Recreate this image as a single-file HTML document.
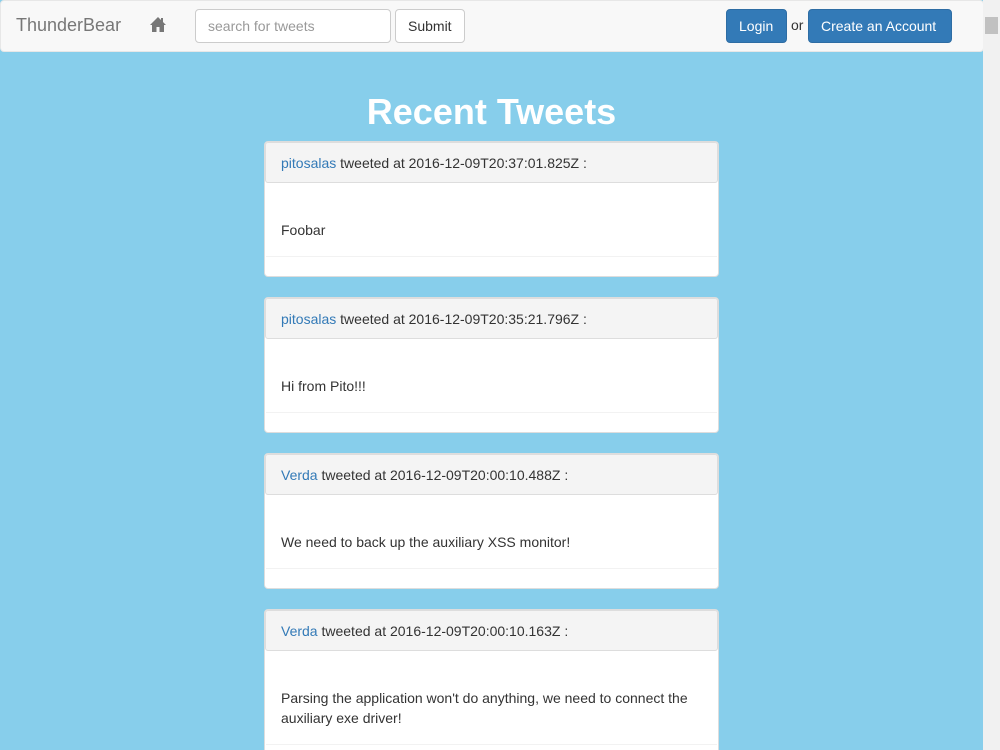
<!DOCTYPE html>
<html style="overflow:hidden;height:750px"><head><style>
body{margin:0;width:1000px;height:750px;overflow:hidden;background:#87ceeb;font-family:"Liberation Sans",sans-serif;font-size:14px;color:#333;position:relative}
.nav{position:absolute;left:0;top:0;width:982px;height:50px;background:#f8f8f8;border:1px solid #e7e7e7;border-radius:4px}
.brand{position:absolute;left:15px;top:14px;font-size:18px;color:#777}
.inp{position:absolute;left:194px;top:8px;width:196px;height:34px;border:1px solid #ccc;border-radius:4px;background:#fff;box-sizing:border-box;padding:8px 12px;color:#999}
.btn{position:absolute;top:8px;height:34px;box-sizing:border-box;border-radius:4px;padding:8px 12px;font-size:14px}
.sb{position:absolute;right:0;top:0;width:17px;height:750px;background:#f1f1f1}
.sb div{position:absolute;left:2px;top:17px;width:13px;height:17px;background:#c1c1c1}
h1{position:absolute;left:0;width:983px;top:91px;margin:0;text-align:center;color:#fff;font-size:36px;font-weight:bold}
.card{position:absolute;left:264px;width:453px;background:#fff;border:1px solid #ddd;border-radius:4px;height:134px}
.hd{position:absolute;left:0;top:0;right:0;height:41px;background:#f4f4f4;border:1px solid #ddd;border-radius:3px;margin:0;box-sizing:border-box;padding:12px 15px}
.hd a{color:#337ab7;text-decoration:none}
.bd{position:absolute;left:16px;right:16px;top:78px;line-height:20px}
.ln{position:absolute;left:1px;right:1px;top:114px;border-top:1px solid #f2f2f2}
</style></head><body>
<div class="nav">
<div class="brand">ThunderBear</div>
<svg style="position:absolute;left:149px;top:16px" width="16" height="15" viewBox="0 0 16 15"><path d="M8 0L0 8h2v7h4.5v-5h3v5H14V8h2L13 5V1h-2v2z" fill="#777"/></svg>
<div class="inp">search for tweets</div>
<div class="btn" style="left:394px;width:70px;border:1px solid #ccc;background:#fff;color:#333">Submit</div>
<div class="btn" style="left:725px;width:61px;background:#337ab7;border:1px solid #2e6da4;color:#fff">Login</div>
<div style="position:absolute;left:790px;top:16px;color:#333">or</div>
<div class="btn" style="left:807px;width:144px;background:#337ab7;border:1px solid #2e6da4;color:#fff">Create an Account</div>
</div>
<div class="sb"><div></div></div>
<h1>Recent Tweets</h1>
<div class="card" style="top:141px"><div class="hd"><a>pitosalas</a> tweeted at 2016-12-09T20:37:01.825Z :</div><div class="bd">Foobar</div><div class="ln"></div></div>
<div class="card" style="top:297px"><div class="hd"><a>pitosalas</a> tweeted at 2016-12-09T20:35:21.796Z :</div><div class="bd">Hi from Pito!!!</div><div class="ln"></div></div>
<div class="card" style="top:453px"><div class="hd"><a>Verda</a> tweeted at 2016-12-09T20:00:10.488Z :</div><div class="bd">We need to back up the auxiliary XSS monitor!</div><div class="ln"></div></div>
<div class="card" style="top:609px;height:160px"><div class="hd"><a>Verda</a> tweeted at 2016-12-09T20:00:10.163Z :</div><div class="bd">Parsing the application won't do anything, we need to connect the auxiliary exe driver!</div><div class="ln" style="top:134px"></div></div>
</body></html>
